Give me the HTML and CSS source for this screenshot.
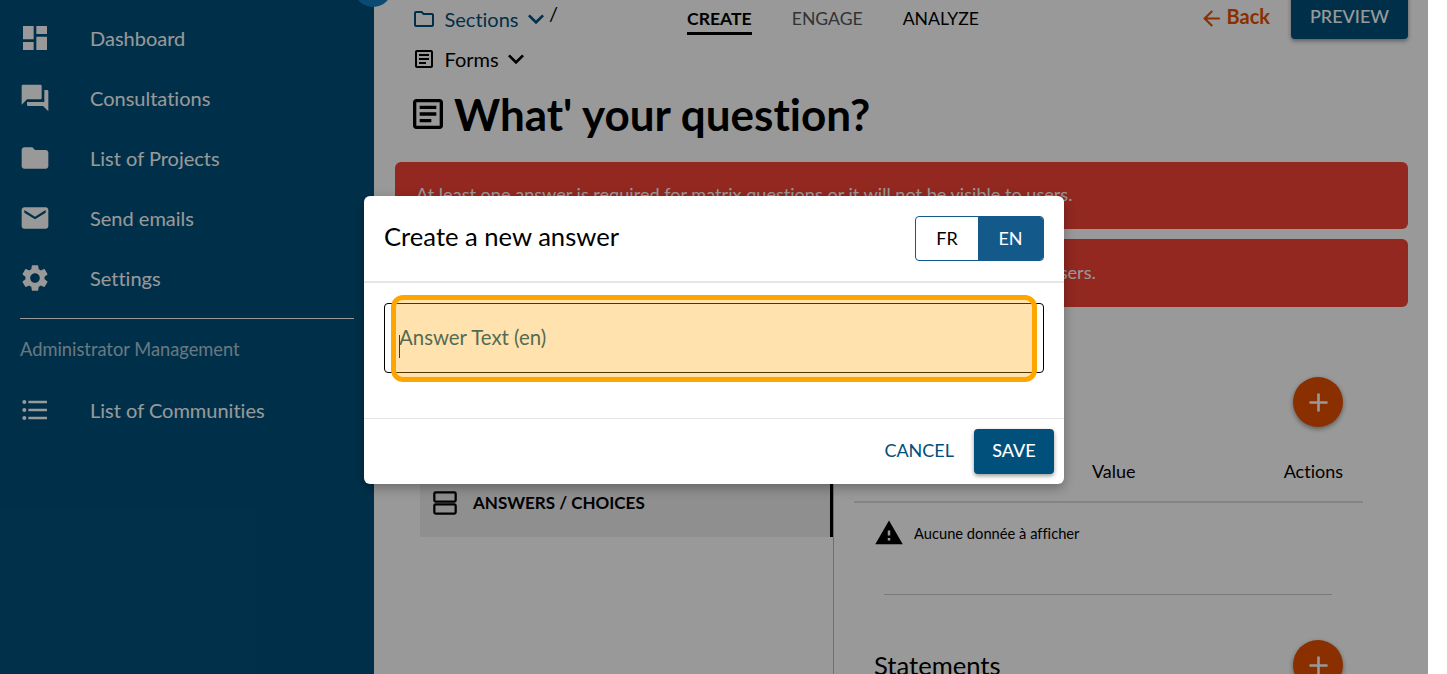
FILE: index.html
```html
<!DOCTYPE html>
<html lang="en">
<head>
  <meta charset="UTF-8" />
  <meta name="viewport" content="width=device-width, initial-scale=1.0" />
  <title>What' your question?</title>
  <link rel="stylesheet" href="styles.css">
</head>
<body>

  <div class="app">

    <!-- Sidebar -->
    <nav class="sidebar">
      <a class="nav-item" href="#">
        <svg class="nav-icon" viewBox="0 0 24 24"><path d="M3 13h8V3H3v10zm0 8h8v-6H3v6zm10 0h8V11h-8v10zm0-18v6h8V3h-8z"/></svg>
        Dashboard
      </a>
      <a class="nav-item" href="#">
        <svg class="nav-icon" viewBox="0 0 24 24"><path d="M21 6h-2v9H6v2c0 .55.45 1 1 1h11l4 4V7c0-.55-.45-1-1-1zm-4 6V3c0-.55-.45-1-1-1H3c-.55 0-1 .45-1 1v14l4-4h10c.55 0 1-.45 1-1z"/></svg>
        Consultations
      </a>
      <a class="nav-item" href="#">
        <svg class="nav-icon" viewBox="0 0 24 24"><path d="M10 4H4c-1.1 0-1.99.9-1.99 2L2 18c0 1.1.9 2 2 2h16c1.1 0 2-.9 2-2V8c0-1.1-.9-2-2-2h-8l-2-2z"/></svg>
        List of Projects
      </a>
      <a class="nav-item" href="#">
        <svg class="nav-icon" viewBox="0 0 24 24"><path d="M20 4H4c-1.1 0-1.99.9-1.99 2L2 18c0 1.1.9 2 2 2h16c1.1 0 2-.9 2-2V6c0-1.1-.9-2-2-2zm0 4l-8 5-8-5V6l8 5 8-5v2z"/></svg>
        Send emails
      </a>
      <a class="nav-item" href="#">
        <svg class="nav-icon" viewBox="0 0 24 24"><path d="M19.14 12.94c.04-.3.06-.61.06-.94 0-.32-.02-.64-.07-.94l2.03-1.58c.18-.14.23-.41.12-.61l-1.92-3.32c-.12-.22-.37-.29-.59-.22l-2.39.96c-.5-.38-1.03-.7-1.62-.94l-.36-2.54c-.04-.24-.24-.41-.48-.41h-3.84c-.24 0-.43.17-.47.41l-.36 2.54c-.59.24-1.13.57-1.62.94l-2.39-.96c-.22-.08-.47 0-.59.22L2.74 8.87c-.12.21-.08.47.12.61l2.03 1.58c-.05.3-.09.63-.09.94s.02.64.07.94l-2.03 1.58c-.18.14-.23.41-.12.61l1.92 3.32c.12.22.37.29.59.22l2.39-.96c.5.38 1.03.7 1.62.94l.36 2.54c.05.24.24.41.48.41h3.84c.24 0 .44-.17.47-.41l.36-2.54c.59-.24 1.13-.56 1.62-.94l2.39.96c.22.08.47 0 .59-.22l1.92-3.32c.12-.22.07-.47-.12-.61l-2.01-1.58zM12 15.6c-1.98 0-3.6-1.62-3.6-3.6s1.62-3.6 3.6-3.6 3.6 1.62 3.6 3.6-1.62 3.6-3.6 3.6z"/></svg>
        Settings
      </a>
      <hr class="nav-divider" />
      <div class="nav-heading">Administrator Management</div>
      <a class="nav-item" href="#">
        <svg class="nav-icon" viewBox="0 0 24 24"><path d="M4 10.5c-.83 0-1.5.67-1.5 1.5s.67 1.5 1.5 1.5 1.5-.67 1.5-1.5-.67-1.5-1.5-1.5zm0-6c-.83 0-1.5.67-1.5 1.5S3.17 7.5 4 7.5 5.5 6.83 5.5 6 4.83 4.5 4 4.5zm0 12c-.83 0-1.5.68-1.5 1.5s.68 1.5 1.5 1.5 1.5-.68 1.5-1.5-.67-1.5-1.5-1.5zM7 19h14v-2H7v2zm0-6h14v-2H7v2zm0-8v2h14V5H7z"/></svg>
        List of Communities
      </a>
    </nav>

    <!-- Main Content -->
    <main class="main">
      <span class="collapse-dot"></span>

      <div class="topbar">
        <div class="crumb crumb-link">
          <svg class="crumb-icon" viewBox="0 0 24 24"><path d="M9.17 6l2 2H20v10H4V6h5.17M10 4H4c-1.1 0-1.99.9-1.99 2L2 18c0 1.1.9 2 2 2h16c1.1 0 2-.9 2-2V8c0-1.1-.9-2-2-2h-8l-2-2z"/></svg>
          <span>Sections</span>
          <svg class="crumb-chevron" viewBox="0 0 24 24"><path d="M16.59 8.59L12 13.17 7.41 8.59 6 10l6 6 6-6z"/></svg>
          <span class="crumb-slash">/</span>
        </div>
        <div class="tabs">
          <a class="tab tab-active" href="#">CREATE</a>
          <a class="tab tab-muted" href="#">ENGAGE</a>
          <a class="tab" href="#">ANALYZE</a>
        </div>
        <a class="back-link" href="#">
          <svg class="back-icon" viewBox="0 0 24 24"><path d="M20 11H7.83l5.59-5.59L12 4l-8 8 8 8 1.41-1.41L7.83 13H20v-2z"/></svg>
          Back
        </a>
        <button class="preview-btn">PREVIEW</button>
      </div>

      <div class="crumb crumb-forms">
        <svg class="crumb-icon" viewBox="0 0 24 24"><path d="M19 5v14H5V5h14m0-2H5c-1.1 0-2 .9-2 2v14c0 1.1.9 2 2 2h14c1.1 0 2-.9 2-2V5c0-1.1-.9-2-2-2z"/><path d="M14 17H7v-2h7v2zm3-4H7v-2h10v2zm0-4H7V7h10v2z"/></svg>
        <span>Forms</span>
        <svg class="crumb-chevron" viewBox="0 0 24 24"><path d="M16.59 8.59L12 13.17 7.41 8.59 6 10l6 6 6-6z"/></svg>
      </div>

      <h1 class="page-title">
        <svg class="title-icon" viewBox="0 0 24 24"><path d="M19 5v14H5V5h14m0-2H5c-1.1 0-2 .9-2 2v14c0 1.1.9 2 2 2h14c1.1 0 2-.9 2-2V5c0-1.1-.9-2-2-2z"/><path d="M14 17H7v-2h7v2zm3-4H7v-2h10v2zm0-4H7V7h10v2z"/></svg>
        What' your question?
      </h1>

      <div class="alert alert-first">At least one answer is required for matrix questions or it will not be visible to users.</div>
      <div class="alert alert-second">At least one statement is required for matrix questions or it will not be visible to users.</div>

      <div class="columns">
        <div class="side-col">
          <a class="side-item" href="#">
            <svg class="side-icon" viewBox="0 0 24 24"><rect x="4" y="4" width="16" height="7" rx="1"/><rect x="4" y="13" width="16" height="7" rx="1"/></svg>
            ANSWERS / CHOICES
          </a>
        </div>
        <div class="detail-col">
          <div class="section-head">
            <button class="add-btn"><svg viewBox="0 0 24 24"><path d="M19 13h-6v6h-2v-6H5v-2h6V5h2v6h6v2z"/></svg></button>
          </div>
          <div class="table-head">
            <span class="col-name"></span>
            <span class="col-value">Value</span>
            <span>Actions</span>
          </div>
          <div class="empty-row">
            <svg class="warn-icon" viewBox="0 0 24 24"><path d="M1 21h22L12 2 1 21zm12-3h-2v-2h2v2zm0-4h-2v-4h2v4z"/></svg>
            Aucune donnée à afficher
          </div>
          <hr class="section-divider" />
          <div class="section-head">
            <h2 class="section-title">Statements</h2>
            <button class="add-btn"><svg viewBox="0 0 24 24"><path d="M19 13h-6v6h-2v-6H5v-2h6V5h2v6h6v2z"/></svg></button>
          </div>
        </div>
      </div>
    </main>
  </div>

  <!-- Dialog -->
  <div class="scrim">
    <div class="dialog">
      <div class="dialog-head">
        <h2 class="dialog-title">Create a new answer</h2>
        <div class="lang-toggle">
          <span class="lang">FR</span>
          <span class="lang lang-active">EN</span>
        </div>
      </div>
      <div class="dialog-body">
        <div class="field">
          <span class="caret"></span>
          <span class="field-label">Answer Text (en)</span>
          <span class="highlight"></span>
        </div>
      </div>
      <div class="dialog-foot">
        <a class="cancel-btn" href="#">CANCEL</a>
        <button class="save-btn">SAVE</button>
      </div>
    </div>
  </div>

</body>
</html>
```

FILE: styles.css
```css
* {
  box-sizing: border-box;
}

html, body {
  height: 100%;
}

body {
  margin: 0;
  background: #ffffff;
  font-family: Lato, "Liberation Sans", sans-serif;
  font-variant-ligatures: none;
  color: #000000;
  overflow: hidden;
}

a {
  text-decoration: none;
  color: inherit;
}

button {
  font-family: inherit;
  border: none;
  cursor: pointer;
}

.app {
  display: flex;
  width: 1428px;
  height: 674px;
  overflow: hidden;
}

/* Sidebar */
.sidebar {
  flex: 0 0 374px;
  background-color: #00507b;
  padding: 8px 20px 0 0;
  color: #ffffff;
}

.nav-item {
  display: flex;
  align-items: center;
  gap: 39px;
  height: 60px;
  padding-left: 19px;
  font-size: 20px;
}

.nav-icon {
  width: 32px;
  height: 32px;
  fill: #ffffff;
}

.nav-divider {
  margin: 10px 0 0 20px;
  border: none;
  border-top: 1px solid #ffffff;
}

.nav-heading {
  margin: 19px 0 22px 20px;
  font-size: 18.3px;
  line-height: 22px;
  color: rgba(255, 255, 255, 0.7);
}

.nav-heading + .nav-item {
  margin-top: -2px;
}

/* Main */
.main {
  position: relative;
  flex: 1;
  padding: 0 20px 0 21px;
}

.collapse-dot {
  position: absolute;
  top: -31px;
  left: -20px;
  width: 38px;
  height: 38px;
  border-radius: 50%;
  background-color: #137cbd;
}

.topbar {
  display: flex;
  height: 39px;
}

.crumb {
  display: flex;
  align-items: center;
  font-size: 20px;
}

.crumb-link {
  width: 273px;
  height: 37px;
  margin-left: 19px;
  color: #00507b;
  fill: #00507b;
}

.crumb-icon {
  width: 24px;
  height: 24px;
  margin-left: -2px;
  margin-right: 8.5px;
}

.crumb-chevron {
  width: 32px;
  height: 32px;
  margin-left: 1.5px;
}

.crumb-slash {
  align-self: flex-start;
  margin-top: 1px;
  margin-left: -3px;
  color: #000000;
}

.crumb-forms {
  height: 24px;
  margin: 8px 0 0 19px;
}

.tabs {
  display: flex;
  gap: 40px;
  height: 35px;
}

.tab {
  height: 35px;
  padding-top: 8px;
  font-size: 17.6px;
  line-height: 22px;
  color: #000000;
}

.tab-active {
  font-weight: 700;
  border-bottom: 3px solid #000000;
}

.tab-muted {
  color: #555555;
}

.back-link {
  display: flex;
  align-items: center;
  height: 32px;
  margin-left: auto;
  margin-right: 21px;
  font-size: 20px;
  font-weight: 700;
  color: #e65100;
  fill: #e65100;
}

.back-icon {
  width: 25px;
  height: 25px;
  margin-top: 5px;
  margin-left: -1px;
  margin-right: 3px;
}

.preview-btn {
  flex: 0 0 117px;
  height: 50px;
  margin-top: -11px;
  padding-top: 4px;
  border-radius: 4px;
  background-color: #00507b;
  color: #ffffff;
  font-size: 18px;
  font-weight: 500;
  box-shadow: 0 2px 4px rgba(0, 0, 0, 0.4);
}

.page-title {
  display: flex;
  align-items: center;
  gap: 6px;
  height: 56px;
  margin: 15px 0 0 13px;
  font-size: 44px;
  font-weight: 700;
  line-height: 56px;
}

.title-icon {
  width: 40px;
  height: 40px;
}

.alert {
  height: 67px;
  padding: 21px 21px 0;
  border-radius: 6px;
  background-color: #f44336;
  color: #ffffff;
  font-size: 18.1px;
  line-height: 22px;
}

.alert-first {
  margin-top: 20px;
}

.alert-second {
  height: 68px;
  margin-top: 10px;
  padding-top: 22px;
}

/* Columns below alerts */
.columns {
  display: flex;
  height: 367px;
}

.side-col {
  flex: 0 0 439px;
  padding: 163px 0 0 25px;
  border-right: 1px solid #bbbbbb;
}

.side-item {
  display: flex;
  align-items: center;
  gap: 12px;
  height: 67px;
  padding: 0 0 2px 9px;
  border-right: 3px solid #000000;
  background-color: #eeeeee;
  font-size: 17px;
  font-weight: 700;
}

.side-icon {
  width: 32px;
  height: 32px;
  fill: none;
  stroke: #000000;
  stroke-width: 1.7;
}

.detail-col {
  flex: 1;
  padding: 70px 45px 0 20px;
}

.section-head {
  display: flex;
  align-items: center;
  justify-content: flex-end;
  height: 50px;
  padding-left: 20px;
}

.section-title {
  flex: 1;
  margin: 0;
  font-size: 25.6px;
  font-weight: 400;
}

.add-btn {
  display: flex;
  align-items: center;
  justify-content: center;
  width: 50px;
  height: 50px;
  margin-right: 20px;
  padding: 0;
  border-radius: 50%;
  background-color: #e65100;
  fill: #ffffff;
  box-shadow: 0 2px 5px rgba(0, 0, 0, 0.4);
}

.add-btn svg {
  width: 31px;
  height: 31px;
}

.table-head {
  display: flex;
  align-items: center;
  height: 76px;
  padding-top: 13px;
  padding-right: 20px;
  border-bottom: 2px solid #dddddd;
  font-size: 18px;
}

.col-name {
  padding-left: 20px;
  width: 238px;
}

.col-value {
  flex: 1;
}

.empty-row {
  display: flex;
  align-items: center;
  gap: 10px;
  height: 91px;
  padding: 0 0 32px 20px;
  font-size: 14.7px;
}

.warn-icon {
  width: 30px;
  height: 30px;
}

.section-divider {
  margin: 0 31px 45px 30px;
  border: none;
  border-top: 1px solid #cccccc;
}

/* Dialog */
.scrim {
  position: absolute;
  top: 0;
  left: 0;
  width: 1428px;
  height: 674px;
  background-color: rgba(0, 0, 0, 0.4);
}

.dialog {
  position: absolute;
  top: 196px;
  left: 364px;
  width: 700px;
  height: 288px;
  border-radius: 6px;
  background-color: #ffffff;
  box-shadow: 0 4px 12px rgba(0, 0, 0, 0.3);
}

.dialog-head {
  display: flex;
  align-items: center;
  justify-content: space-between;
  height: 87px;
  padding: 0 20px;
  border-bottom: 2px solid #e5e5e5;
}

.dialog-title {
  margin: 0 0 6px;
  font-size: 25.6px;
  font-weight: 400;
}

.lang-toggle {
  display: flex;
  width: 129px;
  height: 45px;
  border: 1px solid #135a8a;
  border-radius: 4px;
  overflow: hidden;
  font-size: 18px;
}

.lang {
  display: flex;
  align-items: center;
  justify-content: center;
  flex: 0 0 62px;
  padding-bottom: 2px;
}

.lang-active {
  flex: 1;
  background-color: #135a8a;
  color: #ffffff;
}

.dialog-body {
  height: 136px;
  padding: 20px 20px 0;
  border-bottom: 1px solid #e5e5e5;
}

.field {
  position: relative;
  display: flex;
  align-items: center;
  height: 70px;
  padding: 0 0 2px 14px;
  border: 1px solid #000000;
  border-radius: 4px;
  font-size: 20.4px;
}

.field-label {
  color: #00507b;
}

.caret {
  position: absolute;
  top: 31px;
  left: 14px;
  width: 1px;
  height: 23px;
  background-color: #000000;
}

.highlight {
  position: absolute;
  top: -9px;
  left: 6px;
  width: 646px;
  height: 87px;
  border: 5px solid #ffa500;
  border-radius: 12px;
  background-color: rgba(255, 165, 0, 0.32);
}

.dialog-foot {
  display: flex;
  align-items: center;
  justify-content: flex-end;
  gap: 20px;
  height: 65px;
  padding: 0 10px 0 0;
}

.cancel-btn {
  margin-bottom: 3px;
  color: #00507b;
  font-size: 18px;
}

.save-btn {
  width: 80px;
  height: 45px;
  padding-bottom: 4px;
  border-radius: 4px;
  background-color: #00507b;
  color: #ffffff;
  font-size: 18px;
  font-weight: 500;
  box-shadow: 0 2px 4px rgba(0, 0, 0, 0.4);
}
```
